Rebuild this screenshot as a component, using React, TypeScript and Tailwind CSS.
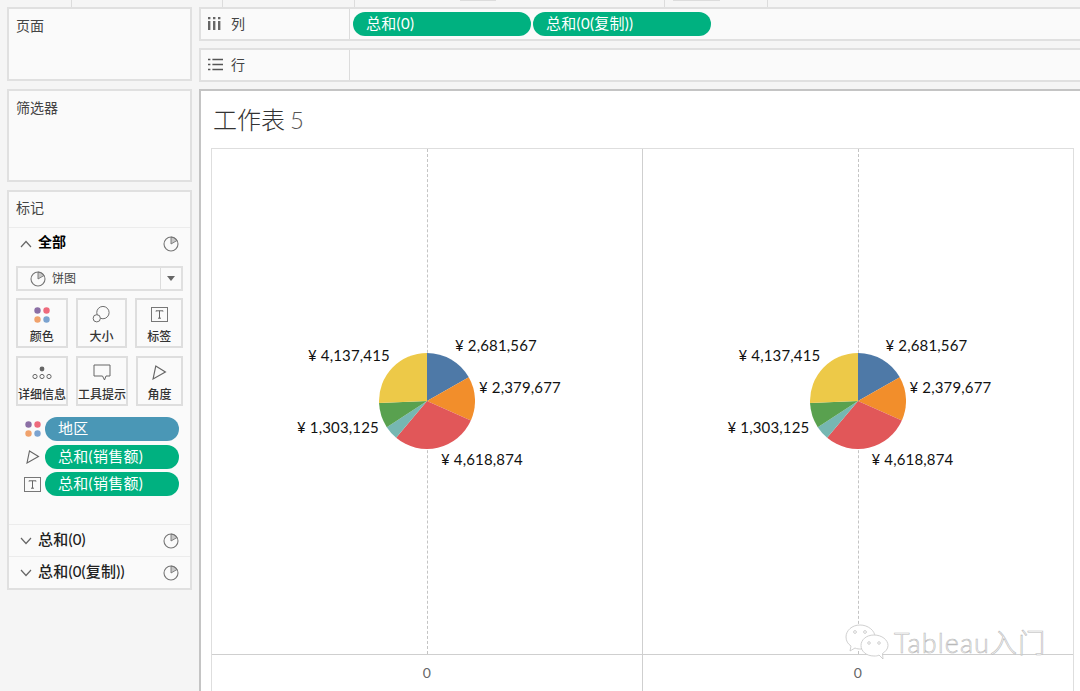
const FONT = '"Lato", "Noto Sans CJK SC", sans-serif'

const SLICES = [
  { from: 0, to: 60.5, color: '#4e79a7' },
  { from: 60.5, to: 114, color: '#f28e2b' },
  { from: 114, to: 220, color: '#e15759' },
  { from: 220, to: 237, color: '#76b7b2' },
  { from: 237, to: 267.5, color: '#59a14f' },
  { from: 267.5, to: 360, color: '#edc948' },
]

const LABELS = [
  { text: '¥ 2,681,567', left: 243, top: 186 },
  { text: '¥ 2,379,677', left: 267, top: 228 },
  { text: '¥ 4,618,874', left: 229, top: 300 },
  { text: '¥ 1,303,125', left: 85, top: 268 },
  { text: '¥ 4,137,415', left: 96, top: 196 },
]

function point(deg: number, r: number) {
  const a = (deg * Math.PI) / 180
  return `${(50 + r * Math.sin(a)).toFixed(2)} ${(50 - r * Math.cos(a)).toFixed(2)}`
}

function Pie() {
  return (
    <svg viewBox="0 0 100 100" className="absolute left-[167px] top-[204px] h-[96px] w-[96px]">
      {SLICES.map((s) => (
        <path
          key={s.color}
          d={`M50 50 L${point(s.from, 50)} A50 50 0 ${s.to - s.from > 180 ? 1 : 0} 1 ${point(s.to, 50)} Z`}
          fill={s.color}
        />
      ))}
    </svg>
  )
}

function PieIcon({ className }: { className: string }) {
  return (
    <svg viewBox="0 0 16 16" className={className} fill="none" stroke="#757575" strokeWidth="1.1">
      <path d="M8 8 V1 A7 7 0 0 1 14 4.5 Z" fill="#c8c8c8" strokeWidth="0.9" />
      <circle cx="8" cy="8" r="7" />
    </svg>
  )
}

function Chevron({ up }: { up?: boolean }) {
  return (
    <svg viewBox="0 0 12 8" className="h-[8px] w-[12px]" fill="none" stroke="#666" strokeWidth="1.2">
      <path d={up ? 'M1 7 L6 1.5 L11 7' : 'M1 1 L6 6.5 L11 1'} />
    </svg>
  )
}

function Dots({ className }: { className: string }) {
  return (
    <svg viewBox="0 0 16 16" className={className}>
      <circle cx="3.5" cy="3.5" r="3.2" fill="#8b6fa5" />
      <circle cx="12.5" cy="3.5" r="3.2" fill="#ee6a7c" />
      <circle cx="3.5" cy="12.5" r="3.2" fill="#f0a26c" />
      <circle cx="12.5" cy="12.5" r="3.2" fill="#7ba3d0" />
    </svg>
  )
}

function SizeIcon() {
  return (
    <svg viewBox="0 0 20 20" className="h-[19px] w-[19px]" fill="none" stroke="#666" strokeWidth="1">
      <circle cx="11.5" cy="8" r="6.5" />
      <circle cx="5" cy="14" r="3.8" fill="#fafafa" />
    </svg>
  )
}

function LabelIcon({ className }: { className: string }) {
  return (
    <svg viewBox="0 0 17 15" className={className} fill="none">
      <rect x="0.5" y="0.5" width="16" height="14" stroke="#777" />
      <path d="M5 4.5 V3.8 H12 V4.5 M8.5 3.8 V11.2 M7 11.2 H10" stroke="#666" />
    </svg>
  )
}

function DetailIcon() {
  return (
    <svg viewBox="0 0 20 14" className="h-[14px] w-[20px]" fill="none" stroke="#666">
      <circle cx="10" cy="3" r="2.4" fill="#666" stroke="none" />
      <circle cx="3" cy="10.5" r="2.1" />
      <circle cx="10" cy="10.5" r="2.1" />
      <circle cx="17" cy="10.5" r="2.1" />
    </svg>
  )
}

function TooltipIcon() {
  return (
    <svg viewBox="0 0 18 17" className="h-[17px] w-[18px]" fill="none" stroke="#666">
      <path d="M1 1 H17 V12 H13 L11.5 16 L9.5 12 H1 Z" />
    </svg>
  )
}

function AngleIcon({ className }: { className: string }) {
  return (
    <svg viewBox="0 0 14 14" className={className} fill="none" stroke="#666" strokeWidth="1.1">
      <path d="M3.5 1 L12.5 6.5 L1 13 Z" />
    </svg>
  )
}

function MarkButton({ label, icon, width }: { label: string; icon: React.ReactNode; width: string }) {
  return (
    <div className={`flex h-[50px] ${width} flex-col items-center border-2 border-[#dedede] bg-[#fafafa] pt-[4px]`}>
      <div className="flex h-[21px] items-center justify-center">{icon}</div>
      <span className="mt-[4px] text-[12px] leading-[16px] font-medium whitespace-nowrap text-[#333]">{label}</span>
    </div>
  )
}

function Pill({ children, tone, className }: { children: string; tone: string; className: string }) {
  return (
    <div className={`flex h-[24px] items-center rounded-full pb-[1px] pl-[13px] text-[15px] tracking-[0.3px] text-white ${tone} ${className}`}>
      {children}
    </div>
  )
}

function Pane({ border }: { border?: boolean }) {
  return (
    <div className={`relative h-[505px] ${border ? 'border-r border-[#cfcfcf]' : ''}`}>
      <div className="absolute left-[215px] top-0 h-full border-l border-dashed border-[#c4c4c4]" />
      <Pie />
      {LABELS.map((l) => (
        <span
          key={l.text}
          className="absolute text-[15px] leading-[20px] tracking-[0.15px] whitespace-nowrap text-[#111]"
          style={{ left: l.left, top: l.top }}
        >
          {l.text}
        </span>
      ))}
    </div>
  )
}

function Section({ title }: { title: string }) {
  return (
    <div className="flex h-[32px] items-center border-t border-[#ececec] pl-[11px] pr-[11px]">
      <Chevron />
      <span className="ml-[6px] flex-1 pb-[2px] text-[15px] font-medium tracking-[0.2px] text-[#222]">{title}</span>
      <PieIcon className="h-[16px] w-[16px]" />
    </div>
  )
}

export default function App() {
  return (
    <div
      className="relative flex h-[691px] w-[1080px] flex-col overflow-hidden bg-[#f5f5f5]"
      style={{ fontFamily: FONT }}
    >
      {/* Top strip */}
      <div className="flex h-[7px] shrink-0">
        <div className="w-[72px] border-r border-[#dcdcdc]" />
        <div className="w-[151px] border-r border-[#dcdcdc]" />
        <div className="w-[132px] border-r border-[#dcdcdc]" />
        <div className="w-[310px] border-r border-[#dcdcdc] pl-[105px]">
          <div className="h-[1px] w-[36px] bg-[#dcdcdc]" />
        </div>
        <div className="w-[103px] border-r border-[#dcdcdc] pl-[8px]">
          <div className="h-[1px] w-[47px] bg-[#dcdcdc]" />
        </div>
      </div>

      <div className="flex min-h-0 flex-1 gap-[7px] pl-[7px]">
        {/* Left column */}
        <div className="flex w-[185px] shrink-0 flex-col gap-[8px]">
          <div className="h-[74px] border-2 border-[#e0e0e0] bg-[#fafafa] px-[7px] pt-[7px] text-[14px] leading-[20px] text-[#444]">
            页面
          </div>
          <div className="h-[93px] border-2 border-[#e0e0e0] bg-[#fafafa] px-[7px] pt-[7px] text-[14px] leading-[20px] text-[#444]">
            筛选器
          </div>
          <div className="flex h-[400px] flex-col border-2 border-[#e0e0e0] bg-[#fafafa]">
            <div className="flex h-[35px] items-center px-[7px] pb-[5px] text-[14px] text-[#444]">标记</div>
            <div className="flex h-[32px] items-center border-t border-[#ececec] pl-[11px] pr-[11px]">
              <Chevron up />
              <span className="ml-[6px] flex-1 pb-[4px] text-[14px] font-bold text-black">全部</span>
              <PieIcon className="h-[16px] w-[16px]" />
            </div>

            <div className="mt-[7px] px-[7px]">
              <div className="flex h-[25px] items-center border-2 border-[#e0e0e0] bg-[#fafafa]">
                <PieIcon className="ml-[12px] h-[16px] w-[16px]" />
                <span className="ml-[6px] flex-1 text-[12px] text-[#444]">饼图</span>
                <div className="flex h-full w-[21px] items-center justify-center border-l border-[#dcdcdc]">
                  <div className="h-0 w-0 border-x-[4px] border-t-[5px] border-x-transparent border-t-[#666]" />
                </div>
              </div>

              <div className="mt-[7px] flex gap-[8px]">
                <MarkButton width="w-[52px]" label="颜色" icon={<Dots className="h-[16px] w-[16px]" />} />
                <MarkButton width="w-[52px]" label="大小" icon={<SizeIcon />} />
                <MarkButton width="w-[48px]" label="标签" icon={<LabelIcon className="h-[15px] w-[17px]" />} />
              </div>
              <div className="mt-[8px] flex gap-[8px]">
                <MarkButton width="w-[52px]" label="详细信息" icon={<DetailIcon />} />
                <MarkButton width="w-[52px]" label="工具提示" icon={<TooltipIcon />} />
                <MarkButton width="w-[48px]" label="角度" icon={<AngleIcon className="h-[15px] w-[15px]" />} />
              </div>
            </div>

            <div className="mt-[11px] flex flex-col gap-[3.5px] pl-[15px] pr-[11px]">
              <div className="flex items-center gap-[4px]">
                <div className="flex w-[17px] justify-center">
                  <Dots className="h-[16px] w-[16px]" />
                </div>
                <Pill tone="bg-[#4a97b6]" className="flex-1">地区</Pill>
              </div>
              <div className="flex items-center gap-[4px]">
                <div className="flex w-[17px] justify-center">
                  <AngleIcon className="h-[14px] w-[14px]" />
                </div>
                <Pill tone="bg-[#00b180]" className="flex-1">总和(销售额)</Pill>
              </div>
              <div className="flex items-center gap-[4px]">
                <LabelIcon className="h-[15px] w-[17px]" />
                <Pill tone="bg-[#00b180]" className="flex-1">总和(销售额)</Pill>
              </div>
            </div>

            <div className="mt-auto">
              <Section title="总和(0)" />
              <Section title="总和(0(复制))" />
            </div>
          </div>
        </div>

        {/* Right column */}
        <div className="flex min-w-0 flex-1 flex-col">
          <div className="flex h-[34px] border-y-2 border-l-2 border-[#e0e0e0] bg-[#fafafa]">
            <div className="flex w-[149px] items-center border-r border-[#dcdcdc] pb-[2px] pl-[7px] text-[14px] text-[#444]">
              <svg viewBox="0 0 13 13" className="mr-[10px] h-[13px] w-[13px]" fill="#666">
                <path d="M0 0 H2.4 V2.2 H0 Z M5 0 H7.4 V2.2 H5 Z M10 0 H12.4 V2.2 H10 Z M0 4 H2.4 V13 H0 Z M5 4 H7.4 V13 H5 Z M10 4 H12.4 V13 H10 Z" />
              </svg>
              列
            </div>
            <div className="flex items-center gap-[2px] pl-[3px]">
              <Pill tone="bg-[#00b180]" className="w-[178px]">总和(0)</Pill>
              <Pill tone="bg-[#00b180]" className="w-[178px]">总和(0(复制))</Pill>
            </div>
          </div>

          <div className="mt-[7px] flex h-[34px] border-y-2 border-l-2 border-[#e0e0e0] bg-[#fafafa]">
            <div className="flex w-[149px] items-center border-r border-[#dcdcdc] pb-[2px] pl-[7px] text-[14px] text-[#444]">
              <svg viewBox="0 0 15 13" className="mr-[8px] h-[13px] w-[15px]" stroke="#555" strokeWidth="1.7">
                <path d="M0 1.5 H2.4 M4.4 1.5 H15 M0 6.5 H2.4 M4.4 6.5 H15 M0 11.5 H2.4 M4.4 11.5 H15" />
              </svg>
              行
            </div>
          </div>

          {/* Sheet */}
          <div className="mt-[7px] min-h-0 flex-1 border-l-2 border-t-2 border-[#c4c4c4] bg-white pl-[10px]">
            <div className="flex h-[57px] items-center pl-[2px] text-[24px] font-light text-[#333]">
              工作表<span className="ml-[5px] text-[#555]">5</span>
            </div>
            <div className="w-[863px] border-x border-t border-[#dedede]">
              <div className="grid grid-cols-2 border-b border-[#cfcfcf]">
                <Pane border />
                <Pane />
              </div>
              <div className="grid grid-cols-2">
                <div className="flex h-[40px] items-center justify-center border-r border-[#cfcfcf] pb-[6px] text-[14px] text-[#666]">0</div>
                <div className="flex h-[40px] items-center justify-center pb-[6px] text-[14px] text-[#666]">0</div>
              </div>
            </div>
          </div>
        </div>
      </div>

      {/* Watermark */}
      <div className="absolute left-[845px] top-[624px] flex items-center">
        <svg viewBox="0 0 44 38" className="h-[38px] w-[44px]" fill="#ffffff" stroke="#c4c4c4" strokeWidth="0.8">
          <path d="M15 1 C7 1 1 6.5 1 13 C1 17 3 20 6 22 L5 27 L10 24 C12 25 14 25 16 25 C24 25 30 19 30 13 C30 6.5 23 1 15 1 Z" />
          <path d="M29 11 C21 11 16 16 16 21.5 C16 27 21 32 29 32 C31 32 32.5 32 34 31 L38 35 L37.5 29.5 C40.5 27.5 43 25 43 21.5 C43 16 37 11 29 11 Z" />
          <circle cx="10" cy="8" r="1.4" fill="none" />
          <circle cx="20" cy="8" r="1.4" fill="none" />
          <circle cx="24" cy="19" r="1.3" fill="none" />
          <circle cx="34" cy="19" r="1.3" fill="none" />
        </svg>
        <span className="ml-[5px] text-[27px] leading-[30px] font-light tracking-[1.1px] text-white [-webkit-text-stroke:0.6px_#b8b8b8]">
          Tableau入门
        </span>
      </div>
    </div>
  )
}
